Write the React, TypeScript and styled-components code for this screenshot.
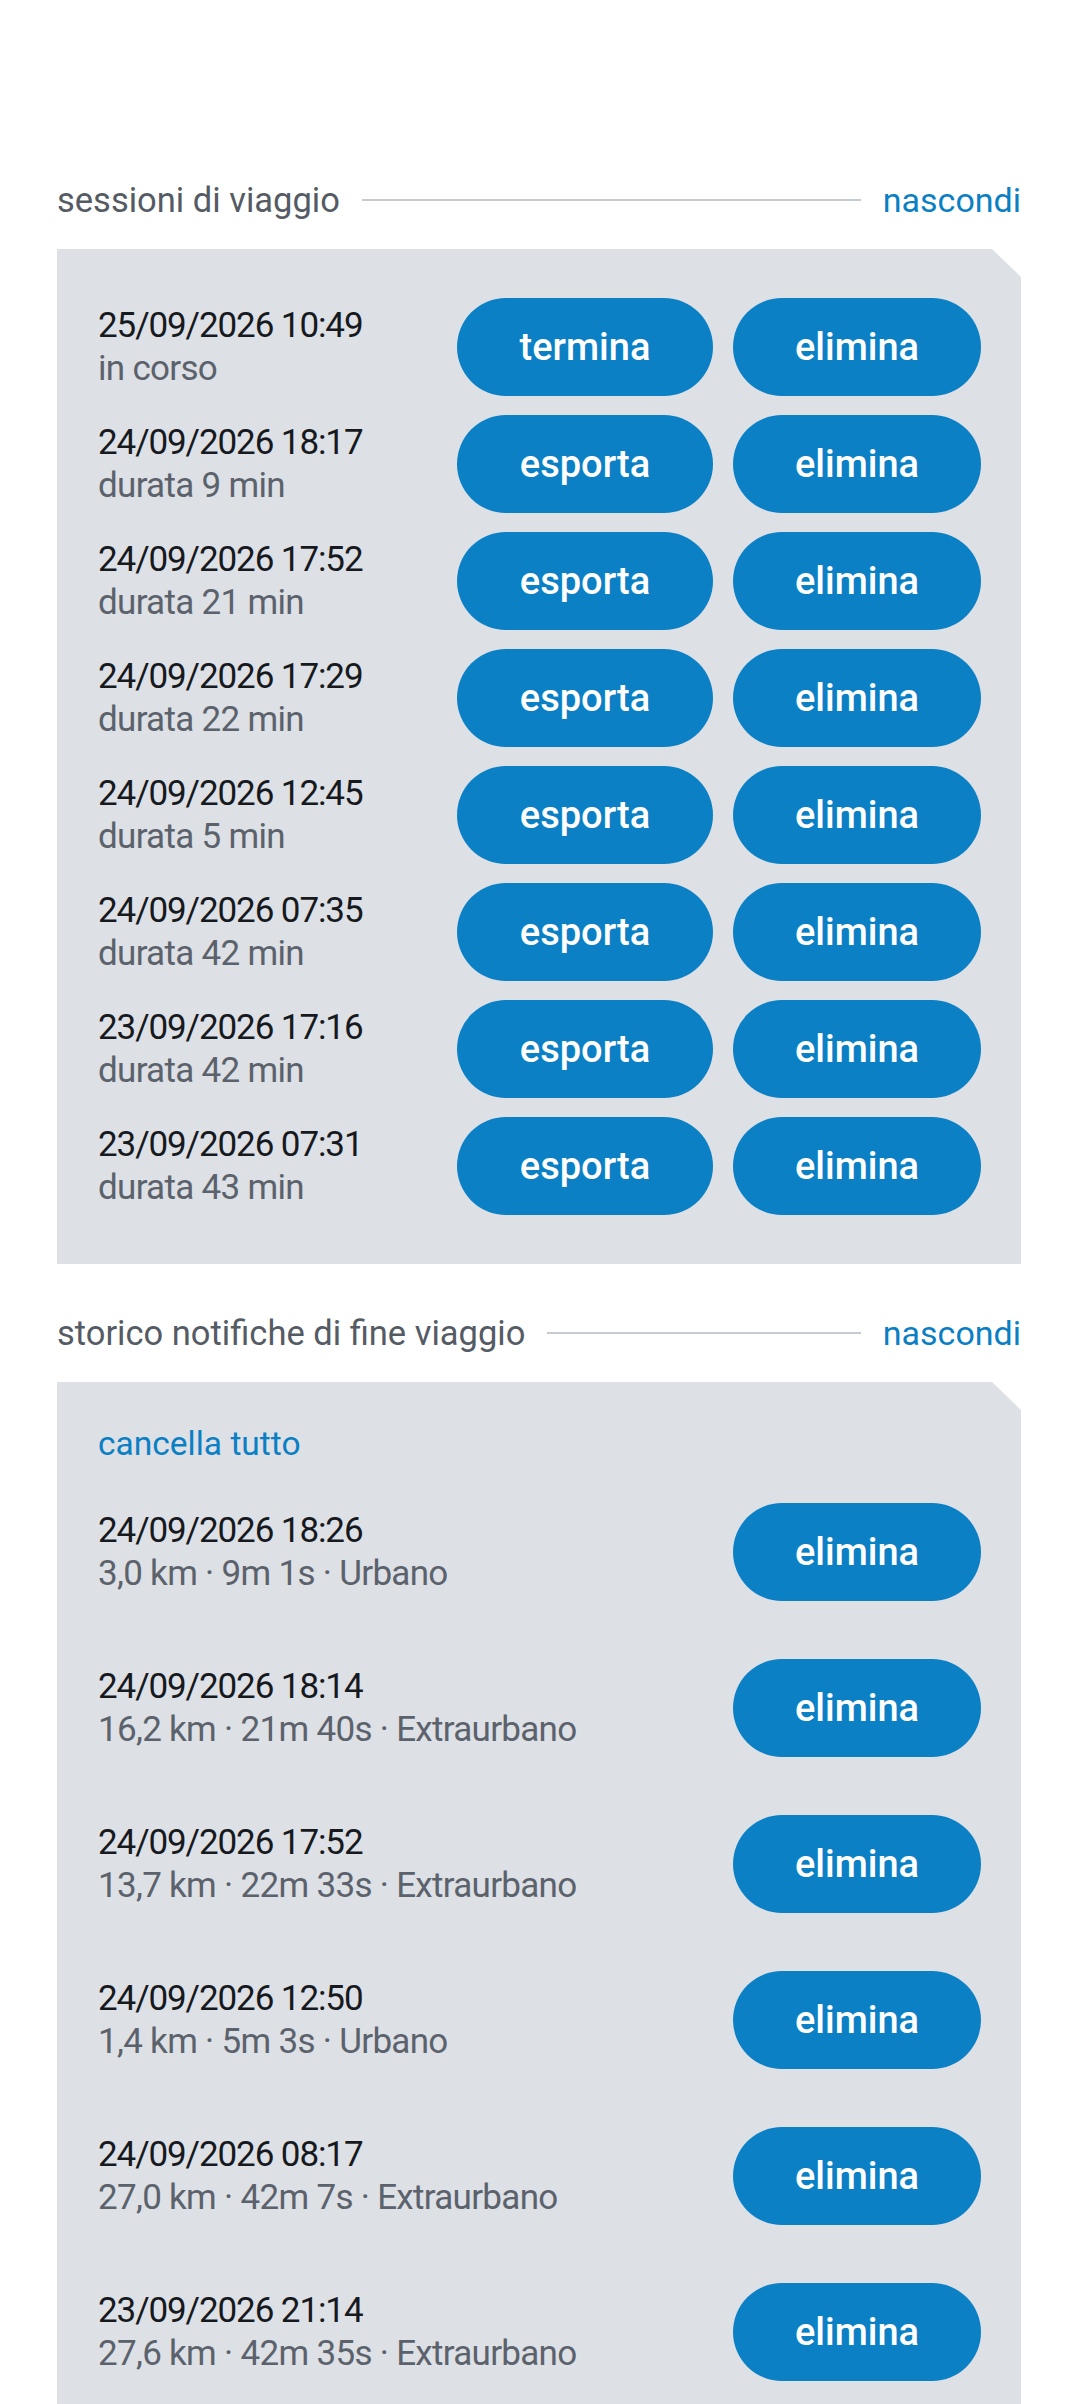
import React from 'react';
import styled, { createGlobalStyle } from 'styled-components';

const GlobalStyle = createGlobalStyle`
  body {
    margin: 0;
    background: #ffffff;
    font-family: Roboto, 'Liberation Sans', sans-serif;
  }
`;

const Page = styled.div`
  padding: 180px 59px 0 57px;
`;

const Section = styled.section`
  & + & {
    margin-top: 49px;
  }
`;

const SectionHeader = styled.div`
  display: flex;
  align-items: center;
  gap: 22px;
  height: 40px;
`;

const SectionTitle = styled.h2`
  margin: 0;
  font-size: 34.5px;
  line-height: 40px;
  font-weight: 400;
  color: #555b64;
  white-space: nowrap;
`;

const Rule = styled.div`
  flex: 1;
  height: 2px;
  background: #c5cad3;
`;

const TextLink = styled.span<{ $size?: number }>`
  font-size: ${p => p.$size ?? 34}px;
  line-height: 40px;
  color: #0b7fc4;
  white-space: nowrap;
  cursor: pointer;
`;

const Panel = styled.div<{ $padTop: number }>`
  margin-top: 29px;
  background: #dde0e5;
  padding: ${p => p.$padTop}px 40px 49px 41px;
  clip-path: polygon(0 0, calc(100% - 29px) 0, 100% 28px, 100% 100%, 0 100%);
`;

const RowList = styled.div<{ $gap: number }>`
  display: flex;
  flex-direction: column;
  gap: ${p => p.$gap}px;
`;

const Row = styled.div`
  display: grid;
  grid-template-columns: 1fr 256px 248px;
  column-gap: 20px;
  align-items: center;
`;

const TextBlock = styled.div`
  display: flex;
  flex-direction: column;
  min-width: 0;
`;

const DateLine = styled.div`
  font-size: 35px;
  line-height: 43px;
  letter-spacing: -1.1px;
  color: #16191d;
  white-space: nowrap;
`;

const SubLine = styled.div`
  font-size: 35px;
  line-height: 43px;
  letter-spacing: -0.7px;
  color: #5b626c;
  white-space: nowrap;
`;

const PillButton = styled.button<{ $col: number }>`
  grid-column: ${p => p.$col};
  height: 98px;
  border: none;
  border-radius: 49px;
  background: #0b80c5;
  color: #ffffff;
  font-family: Roboto, 'Liberation Sans', sans-serif;
  font-size: 38px;
  font-weight: 500;
  cursor: pointer;
  padding: 0;
`;

const ClearAll = styled(TextLink)`
  display: block;
  margin-bottom: 39px;
`;

const sessions = [
  { date: '25/09/2026 10:49', sub: 'in corso', action: 'termina' },
  { date: '24/09/2026 18:17', sub: 'durata 9 min', action: 'esporta' },
  { date: '24/09/2026 17:52', sub: 'durata 21 min', action: 'esporta' },
  { date: '24/09/2026 17:29', sub: 'durata 22 min', action: 'esporta' },
  { date: '24/09/2026 12:45', sub: 'durata 5 min', action: 'esporta' },
  { date: '24/09/2026 07:35', sub: 'durata 42 min', action: 'esporta' },
  { date: '23/09/2026 17:16', sub: 'durata 42 min', action: 'esporta' },
  { date: '23/09/2026 07:31', sub: 'durata 43 min', action: 'esporta' },
];

const notifications = [
  { date: '24/09/2026 18:26', sub: '3,0 km · 9m 1s · Urbano' },
  { date: '24/09/2026 18:14', sub: '16,2 km · 21m 40s · Extraurbano' },
  { date: '24/09/2026 17:52', sub: '13,7 km · 22m 33s · Extraurbano' },
  { date: '24/09/2026 12:50', sub: '1,4 km · 5m 3s · Urbano' },
  { date: '24/09/2026 08:17', sub: '27,0 km · 42m 7s · Extraurbano' },
  { date: '23/09/2026 21:14', sub: '27,6 km · 42m 35s · Extraurbano' },
];

const App: React.FC = () => {
  return (
    <>
      <GlobalStyle />
      <Page>
        <Section>
          <SectionHeader>
            <SectionTitle>sessioni di viaggio</SectionTitle>
            <Rule />
            <TextLink>nascondi</TextLink>
          </SectionHeader>
          <Panel $padTop={49}>
            <RowList $gap={19}>
              {sessions.map((s, i) => (
                <Row key={i}>
                  <TextBlock>
                    <DateLine>{s.date}</DateLine>
                    <SubLine>{s.sub}</SubLine>
                  </TextBlock>
                  <PillButton $col={2}>{s.action}</PillButton>
                  <PillButton $col={3}>elimina</PillButton>
                </Row>
              ))}
            </RowList>
          </Panel>
        </Section>

        <Section>
          <SectionHeader>
            <SectionTitle>storico notifiche di fine viaggio</SectionTitle>
            <Rule />
            <TextLink>nascondi</TextLink>
          </SectionHeader>
          <Panel $padTop={42}>
            <ClearAll $size={33.5}>cancella tutto</ClearAll>
            <RowList $gap={58}>
              {notifications.map((n, i) => (
                <Row key={i}>
                  <TextBlock>
                    <DateLine>{n.date}</DateLine>
                    <SubLine>{n.sub}</SubLine>
                  </TextBlock>
                  <PillButton $col={3}>elimina</PillButton>
                </Row>
              ))}
            </RowList>
          </Panel>
        </Section>
      </Page>
    </>
  );
};

export default App;
